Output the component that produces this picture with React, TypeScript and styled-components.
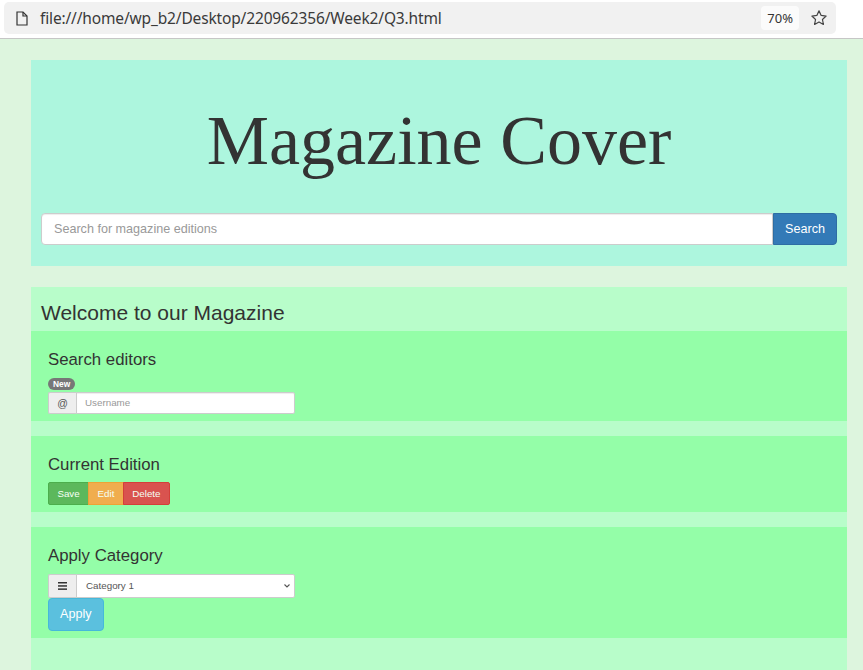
import React from 'react';
import styled, { createGlobalStyle } from 'styled-components';

const GlobalStyle = createGlobalStyle`
  html, body {
    margin: 0;
    padding: 0;
  }
  body {
    font-family: "Liberation Sans", Arial, sans-serif;
    background-color: #ddf5de;
    color: #333;
  }
  * {
    box-sizing: border-box;
  }
`;

const BrowserBar = styled.div`
  height: 39px;
  background-color: #ffffff;
  border-bottom: 1px solid #c6c6c6;
  padding: 2px 27px 0 4px;
`;

const UrlField = styled.div`
  height: 32px;
  background-color: #f1f1f1;
  border-radius: 5px;
  display: flex;
  align-items: center;
  padding: 0 8px 0 12px;
`;

const UrlText = styled.span`
  flex: 1;
  margin-left: 12px;
  font-family: "Noto Sans", "DejaVu Sans", sans-serif;
  font-size: 15.5px;
  color: #3a3a3a;
  letter-spacing: -0.15px;
`;

const ZoomBadge = styled.span`
  background-color: #fbfbfb;
  border-radius: 4px;
  padding: 3px 6px;
  font-family: "Noto Sans", "DejaVu Sans", sans-serif;
  font-size: 13px;
  color: #333;
  margin-right: 11px;
`;

const Page = styled.div`
  padding: 21px 16px 0 31px;
  min-height: calc(100vh - 39px);
`;

const Header = styled.header`
  background-color: #adf6de;
  padding: 42px 10px 21px;
`;

const Title = styled.h1`
  margin: 0 0 34px;
  font-family: "Liberation Serif", "Times New Roman", serif;
  font-weight: normal;
  font-size: 70px;
  line-height: 1.1;
  text-align: center;
  color: #333;
`;

const InputGroup = styled.div<{ $width?: string; $height: number }>`
  display: flex;
  width: ${({ $width }) => $width || '100%'};
  height: ${({ $height }) => $height}px;
`;

const TextInput = styled.input<{ $fontSize: number; $padX: number; $radius: number }>`
  flex: 1;
  min-width: 0;
  height: 100%;
  border: 1px solid #cccccc;
  border-radius: ${({ $radius }) => `${$radius}px 0 0 ${$radius}px`};
  background-color: #ffffff;
  padding: 0 ${({ $padX }) => $padX}px;
  font-family: "Liberation Sans", Arial, sans-serif;
  font-size: ${({ $fontSize }) => $fontSize}px;
  color: #555;
  box-shadow: inset 0 1px 1px rgba(0, 0, 0, 0.075);
  outline: none;
  &::placeholder {
    color: #999;
  }
`;

const SuffixInput = styled(TextInput)`
  border-radius: ${({ $radius }) => `0 ${$radius}px ${$radius}px 0`};
`;

const SearchButton = styled.button`
  height: 100%;
  width: 64px;
  background-color: #337ab7;
  border: 1px solid #2e6da4;
  border-radius: 0 4px 4px 0;
  color: #ffffff;
  font-family: "Liberation Sans", Arial, sans-serif;
  font-size: 12.6px;
  padding: 0;
`;

const Addon = styled.span`
  width: 28px;
  height: 100%;
  display: flex;
  align-items: center;
  justify-content: center;
  background-color: #eeeeee;
  border: 1px solid #cccccc;
  border-right: none;
  border-radius: 2px 0 0 2px;
  font-size: 10.5px;
  color: #555;
`;

const Main = styled.main`
  margin-top: 21px;
  background-color: #b8fdca;
  padding: 14px 0 40px;
`;

const Welcome = styled.h2`
  margin: 0 0 7px 10px;
  font-weight: normal;
  font-size: 21px;
  line-height: 1.1;
  color: #333;
`;

const Section = styled.section`
  background-color: #94fea8;
  padding: 20px 17px 7px;
  margin-bottom: 15px;
  &:last-child {
    margin-bottom: 0;
  }
`;

const SectionTitle = styled.h3`
  margin: 0 0 8px;
  font-weight: normal;
  font-size: 16.8px;
  line-height: 1.1;
  color: #333;
`;

const Badge = styled.span`
  display: block;
  width: fit-content;
  background-color: #777777;
  color: #ffffff;
  font-weight: bold;
  font-size: 8.4px;
  line-height: 12px;
  padding: 0 5px;
  border-radius: 7px;
  margin-bottom: 2px;
`;

const ButtonGroup = styled.div`
  display: flex;
  height: 23px;
`;

const variantColors: Record<string, [string, string]> = {
  success: ['#5cb85c', '#4cae4c'],
  warning: ['#f0ad4e', '#eea236'],
  danger: ['#d9534f', '#d43f3a'],
};

const GroupButton = styled.button<{ $variant: string; $first?: boolean; $last?: boolean }>`
  height: 100%;
  padding: 0 8.4px;
  background-color: ${({ $variant }) => variantColors[$variant][0]};
  border: 1px solid ${({ $variant }) => variantColors[$variant][1]};
  border-radius: ${({ $first, $last }) => ($first ? '2px 0 0 2px' : $last ? '0 2px 2px 0' : '0')};
  color: #f4fff4;
  font-family: "Liberation Sans", Arial, sans-serif;
  font-size: 9.8px;
  margin-left: ${({ $first }) => ($first ? '0' : '-1px')};
`;

const SelectBox = styled.div`
  flex: 1;
  display: flex;
  align-items: center;
  height: 100%;
  border: 1px solid #cccccc;
  border-radius: 0 2px 2px 0;
  background-color: #ffffff;
  padding-right: 3px;
`;

const Select = styled.select`
  flex: 1;
  appearance: none;
  height: 100%;
  border: none;
  background: transparent;
  font-family: "Liberation Sans", Arial, sans-serif;
  font-size: 9.8px;
  color: #555;
  padding: 0 0 0 9px;
  outline: none;
`;

const ApplyButton = styled.button`
  display: block;
  height: 33px;
  padding: 0 11px;
  background-color: #5bc0de;
  border: 1px solid #46b8da;
  border-radius: 4px;
  color: #ffffff;
  font-family: "Liberation Sans", Arial, sans-serif;
  font-size: 12.6px;
`;

const PageIcon = () => (
  <svg width="12" height="15" viewBox="0 0 12 15" fill="none" stroke="#333" strokeWidth="1.2">
    <path d="M1 1h6l4 4v9H1z" />
    <path d="M7 1v4h4" />
  </svg>
);

const StarIcon = () => (
  <svg width="18" height="18" viewBox="0 0 24 24" fill="none" stroke="#444" strokeWidth="1.6" strokeLinejoin="round">
    <path d="M12 2.5l2.9 6.1 6.6.8-4.9 4.6 1.3 6.6L12 17.3l-5.9 3.3 1.3-6.6-4.9-4.6 6.6-.8z" />
  </svg>
);

const MenuIcon = () => (
  <svg width="9" height="8" viewBox="0 0 9 8" fill="#333">
    <rect x="0" y="0" width="9" height="1.5" />
    <rect x="0" y="3.2" width="9" height="1.5" />
    <rect x="0" y="6.4" width="9" height="1.5" />
  </svg>
);

const ChevronIcon = () => (
  <svg width="8" height="6" viewBox="0 0 8 6" fill="none" stroke="#555" strokeWidth="1.1">
    <path d="M1.5 1.5L4 4l2.5-2.5" />
  </svg>
);

const App: React.FC = () => {
  return (
    <>
      <GlobalStyle />
      <BrowserBar>
        <UrlField>
          <PageIcon />
          <UrlText>file:///home/wp_b2/Desktop/220962356/Week2/Q3.html</UrlText>
          <ZoomBadge>70%</ZoomBadge>
          <StarIcon />
        </UrlField>
      </BrowserBar>
      <Page>
        <Header>
          <Title>Magazine Cover</Title>
          <InputGroup $height={32}>
            <TextInput $fontSize={12.6} $padX={12} $radius={4} placeholder="Search for magazine editions" />
            <SearchButton>Search</SearchButton>
          </InputGroup>
        </Header>
        <Main>
          <Welcome>Welcome to our Magazine</Welcome>
          <Section>
            <SectionTitle>Search editors</SectionTitle>
            <Badge>New</Badge>
            <InputGroup $width="247px" $height={22}>
              <Addon>@</Addon>
              <SuffixInput $fontSize={9.8} $padX={8} $radius={2} placeholder="Username" />
            </InputGroup>
          </Section>
          <Section>
            <SectionTitle>Current Edition</SectionTitle>
            <ButtonGroup>
              <GroupButton $variant="success" $first>Save</GroupButton>
              <GroupButton $variant="warning">Edit</GroupButton>
              <GroupButton $variant="danger" $last>Delete</GroupButton>
            </ButtonGroup>
          </Section>
          <Section>
            <SectionTitle>Apply Category</SectionTitle>
            <InputGroup $width="247px" $height={24}>
              <Addon>
                <MenuIcon />
              </Addon>
              <SelectBox>
                <Select defaultValue="1">
                  <option value="1">Category 1</option>
                  <option value="2">Category 2</option>
                  <option value="3">Category 3</option>
                </Select>
                <ChevronIcon />
              </SelectBox>
            </InputGroup>
            <ApplyButton>Apply</ApplyButton>
          </Section>
        </Main>
      </Page>
    </>
  );
};

export default App;
